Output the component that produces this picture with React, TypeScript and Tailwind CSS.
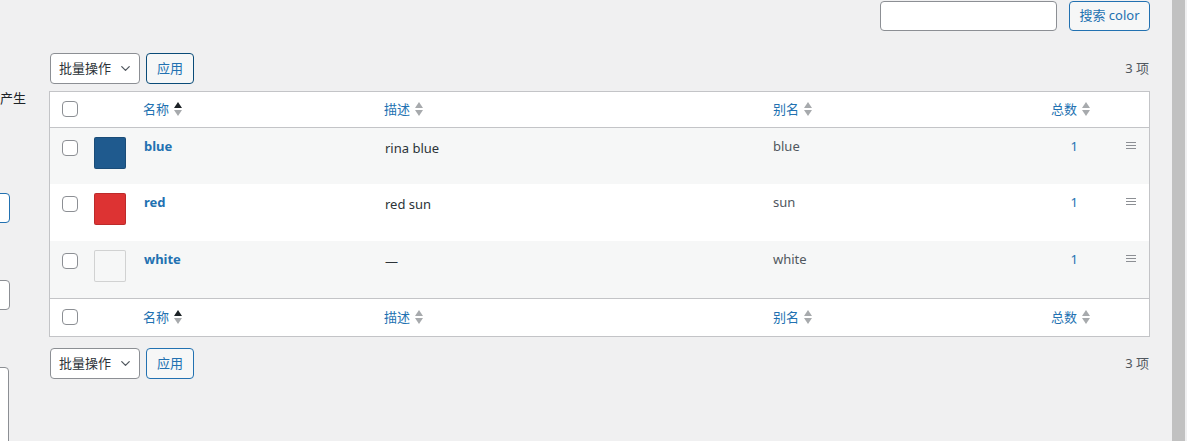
import { ChevronDown } from "lucide-react";

interface TermType {
  id: string;
  nom: string;
  couleur: string;
  description: string;
  alias: string;
  total: number;
}

const termes: TermType[] = [
  { id: "1", nom: "blue", couleur: "bg-[#1f5a8e]", description: "rina blue", alias: "blue", total: 1 },
  { id: "2", nom: "red", couleur: "bg-[#dd3333]", description: "red sun", alias: "sun", total: 1 },
  { id: "3", nom: "white", couleur: "bg-[#f6f7f7]", description: "—", alias: "white", total: 1 },
];

function Fleches({ actif }: { actif?: boolean }) {
  return (
    <span className="inline-flex flex-col items-center gap-[2px] ml-[5px]">
      <svg width="8" height="6" viewBox="0 0 8 6">
        <path d="M4 0 L8 6 L0 6 Z" fill={actif ? "#1d2327" : "#a7aaad"} />
      </svg>
      <svg width="8" height="6" viewBox="0 0 8 6">
        <path d="M0 0 L8 0 L4 6 Z" fill="#a7aaad" />
      </svg>
    </span>
  );
}

function Case() {
  return <span className="block w-4 h-4 rounded-[4px] border border-[#8c8f94] bg-white" />;
}

function BarreActions({ bas }: { bas?: boolean }) {
  return (
    <div className={`flex items-center justify-between pl-[1px] ${bas ? "mt-[11px]" : "mt-[22px] mb-[7px]"}`}>
      <div className="flex items-center gap-[6px]">
        <div className="h-[31px] w-[90px] flex items-center justify-between pl-2 pr-[6px] bg-white border border-[#8c8f94] rounded-[4px] text-[13px] text-[#2c3338]">
          <span>批量操作</span>
          <ChevronDown size={15} strokeWidth={2} className="text-[#50575e]" />
        </div>
        <div className={`h-[31px] w-[48px] flex items-center justify-center rounded-[4px] text-[13px] text-[#2271b1] bg-[#f6f7f7] border ${bas ? "border-[#2271b1]" : "border-[#0a4b78]"}`}>
          应用
        </div>
      </div>
      <span className="text-[13px] text-[#50575e] pr-[1px]">3 项</span>
    </div>
  );
}

function Entete({ pied }: { pied?: boolean }) {
  return (
    <tr className={`${pied ? "h-[38px]" : "h-[35px]"} text-[13px] text-[#2271b1]`}>
      <td className="pl-[12px] align-middle"><Case /></td>
      <td></td>
      <td className="pl-[9px]"><span className="inline-flex items-center">名称<Fleches actif /></span></td>
      <td className="pl-[10px]"><span className="inline-flex items-center">描述<Fleches /></span></td>
      <td className="pl-[10px]"><span className="inline-flex items-center">别名<Fleches /></span></td>
      <td className="text-right pr-[10px]"><span className="inline-flex items-center">总数<Fleches /></span></td>
      <td></td>
    </tr>
  );
}

export default function App() {
  return (
    <div className="w-[1187px] h-[441px] bg-[#f0f0f1] flex overflow-hidden text-[#2c3338]" style={{ fontFamily: '"Noto Sans", "Noto Sans CJK SC", sans-serif' }}>
      {/* colonne gauche coupée */}
      <div className="w-[49px] shrink-0 relative">
        <span className="absolute left-0 top-[89px] text-[13px] text-[#1d2327]">产生</span>
        <div className="absolute left-[-20px] top-[193px] w-[30px] h-[30px] bg-white border border-[#2271b1] rounded-[4px]" />
        <div className="absolute left-[-20px] top-[280px] w-[30px] h-[30px] bg-white border border-[#8c8f94] rounded-[4px]" />
        <div className="absolute left-[-20px] top-[367px] w-[29px] h-[100px] bg-white border border-[#8c8f94] rounded-[4px]" />
      </div>

      {/* contenu principal */}
      <div className="w-[1101px] shrink-0 flex flex-col">
        <div className="flex justify-end items-center gap-[12px] pt-[1px]">
          <div className="w-[177px] h-[30px] bg-white border border-[#8c8f94] rounded-[4px]" />
          <div className="h-[30px] w-[81px] flex items-center justify-center rounded-[4px] border border-[#2271b1] bg-[#f6f7f7] text-[13px] text-[#2271b1]">
            搜索 color
          </div>
        </div>

        <BarreActions />

        <div className="bg-white border border-[#c3c4c7]">
          <table className="w-full table-fixed border-collapse">
            <colgroup>
              <col className="w-[34px]" />
              <col className="w-[50px]" />
              <col className="w-[240px]" />
              <col className="w-[389px]" />
              <col className="w-[237px]" />
              <col className="w-[100px]" />
              <col />
            </colgroup>
            <thead className="border-b border-[#c3c4c7]">
              <Entete />
            </thead>
            <tbody>
              {termes.map((t, i) => (
                <tr key={t.id} className={`h-[57px] align-top ${i % 2 === 0 ? "bg-[#f6f7f7]" : "bg-white"}`}>
                  <td className="pl-[12px] pt-[12px]"><Case /></td>
                  <td className="pl-[10px] pt-[9px]">
                    <span className={`block w-[32px] h-[32px] rounded-[2px] border border-black/15 ${t.couleur}`} />
                  </td>
                  <td className="pl-[10px] pt-[9px] text-[13px] font-bold text-[#2271b1]">{t.nom}</td>
                  <td className="pl-[11px] pt-[11px] text-[13px] text-[#2c3338]">{t.description}</td>
                  <td className="pl-[10px] pt-[9px] text-[13px] text-[#50575e]">{t.alias}</td>
                  <td className="text-right pr-[22px] pt-[9px] text-[13px] text-[#2271b1]">{t.total}</td>
                  <td className="pt-[14px] pl-[26px]">
                    <span className="flex flex-col gap-[2px] w-[10px]">
                      <span className="block h-[1px] bg-[#8c8f94]" />
                      <span className="block h-[1px] bg-[#8c8f94]" />
                      <span className="block h-[1px] bg-[#8c8f94]" />
                    </span>
                  </td>
                </tr>
              ))}
            </tbody>
            <tfoot className="border-t border-[#c3c4c7]">
              <Entete pied />
            </tfoot>
          </table>
        </div>

        <BarreActions bas />
      </div>

      {/* barre de défilement */}
      <div className="w-[22px] shrink-0" />
      <div className="w-[13px] shrink-0 bg-[#c1c1c1]" />
      <div className="flex-1 bg-[#f0f0f1]" />
    </div>
  );
}
